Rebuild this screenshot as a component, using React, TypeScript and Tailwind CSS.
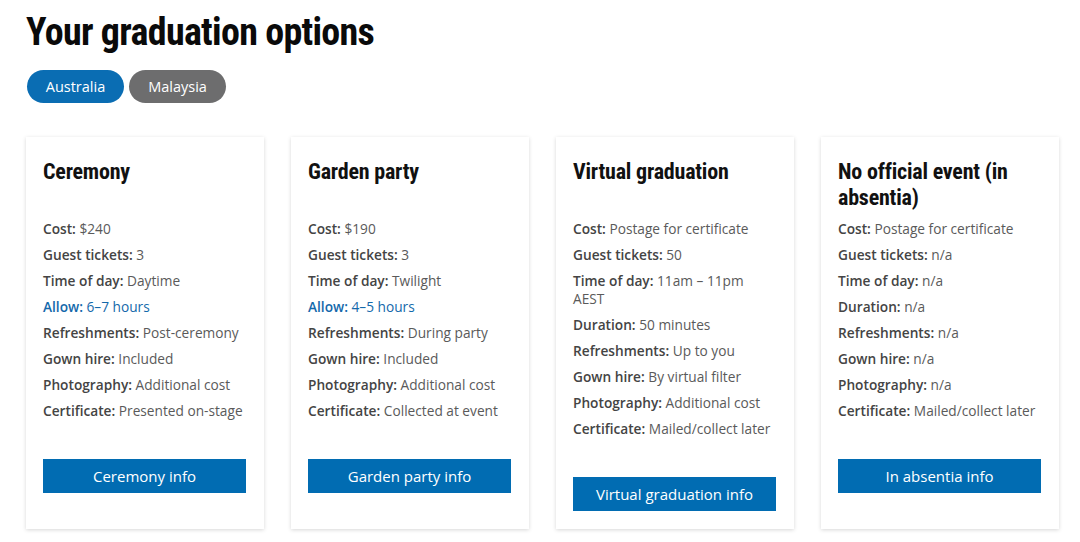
type Row = {
  label: string;
  value: string;
  accent?: boolean;
};

type Option = {
  title: string;
  rows: Row[];
  button: string;
};

const options: Option[] = [
  {
    title: "Ceremony",
    rows: [
      { label: "Cost", value: "$240" },
      { label: "Guest tickets", value: "3" },
      { label: "Time of day", value: "Daytime" },
      { label: "Allow", value: "6–7 hours", accent: true },
      { label: "Refreshments", value: "Post-ceremony" },
      { label: "Gown hire", value: "Included" },
      { label: "Photography", value: "Additional cost" },
      { label: "Certificate", value: "Presented on-stage" },
    ],
    button: "Ceremony info",
  },
  {
    title: "Garden party",
    rows: [
      { label: "Cost", value: "$190" },
      { label: "Guest tickets", value: "3" },
      { label: "Time of day", value: "Twilight" },
      { label: "Allow", value: "4–5 hours", accent: true },
      { label: "Refreshments", value: "During party" },
      { label: "Gown hire", value: "Included" },
      { label: "Photography", value: "Additional cost" },
      { label: "Certificate", value: "Collected at event" },
    ],
    button: "Garden party info",
  },
  {
    title: "Virtual graduation",
    rows: [
      { label: "Cost", value: "Postage for certificate" },
      { label: "Guest tickets", value: "50" },
      { label: "Time of day", value: "11am – 11pm AEST" },
      { label: "Duration", value: "50 minutes" },
      { label: "Refreshments", value: "Up to you" },
      { label: "Gown hire", value: "By virtual filter" },
      { label: "Photography", value: "Additional cost" },
      { label: "Certificate", value: "Mailed/collect later" },
    ],
    button: "Virtual graduation info",
  },
  {
    title: "No official event (in absentia)",
    rows: [
      { label: "Cost", value: "Postage for certificate" },
      { label: "Guest tickets", value: "n/a" },
      { label: "Time of day", value: "n/a" },
      { label: "Duration", value: "n/a" },
      { label: "Refreshments", value: "n/a" },
      { label: "Gown hire", value: "n/a" },
      { label: "Photography", value: "n/a" },
      { label: "Certificate", value: "Mailed/collect later" },
    ],
    button: "In absentia info",
  },
];

const headingFont =
  "font-['Roboto_Condensed','Liberation_Sans_Narrow','DejaVu_Sans_Condensed',Roboto,sans-serif]";

function OptionCard({ option }: { option: Option }) {
  return (
    <div className="flex flex-col bg-white pl-[17px] pr-[18px] pt-[22px] pb-[18px] shadow-[0_1px_4px_rgba(0,0,0,0.16)]">
      <h2
        className={`${headingFont} min-h-[52px] text-[22px] font-bold leading-[26px] text-[#111] tracking-[-0.2px]`}
      >
        {option.title}
      </h2>
      <ul className="mt-[9px] flex flex-col gap-[8px]">
        {option.rows.map((row) => (
          <li
            key={row.label}
            className={`text-[13.7px] leading-[18px] ${
              row.accent ? "text-[#1469ab]" : "text-[#5a5a5a]"
            }`}
          >
            <span
              className={`font-semibold ${
                row.accent ? "text-[#1469ab]" : "text-[#444]"
              }`}
            >
              {row.label}:
            </span>{" "}
            {row.value}
          </li>
        ))}
      </ul>
      <button
        type="button"
        className="mt-[39px] h-[34px] w-full bg-[#016cb2] text-[15px] text-white"
      >
        {option.button}
      </button>
    </div>
  );
}

export default function App() {
  const [region] = ["Australia"];

  return (
    <div className="min-h-[542px] bg-white pl-[26px] pr-[21px] pt-[10px] font-['Open_Sans','Noto_Sans',sans-serif]">
      <h1
        className={`${headingFont} text-[38px] font-bold leading-[44px] text-[#0a0a0a] tracking-[-0.7px]`}
      >
        Your graduation options
      </h1>
      <div className="mt-[16px] flex gap-[5px] pl-[1px]">
        {["Australia", "Malaysia"].map((name) => (
          <button
            key={name}
            type="button"
            className={`h-[33px] w-[97px] rounded-full text-[14.5px] text-white ${
              name === region ? "bg-[#0a6db3]" : "bg-[#6d6d6e]"
            }`}
          >
            {name}
          </button>
        ))}
      </div>
      <div className="mt-[34px] grid grid-cols-4 gap-[27px]">
        {options.map((option) => (
          <OptionCard key={option.title} option={option} />
        ))}
      </div>
    </div>
  );
}
